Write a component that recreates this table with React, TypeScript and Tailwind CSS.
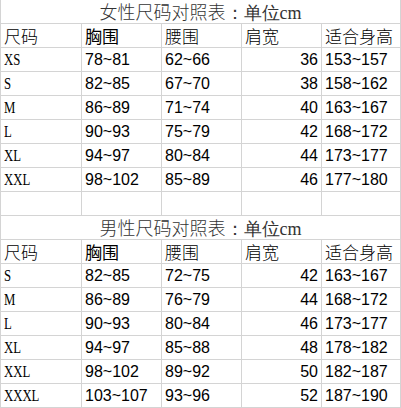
const women = [
  ["XS", "78~81", "62~66", "36", "153~157"],
  ["S", "82~85", "67~70", "38", "158~162"],
  ["M", "86~89", "71~74", "40", "163~167"],
  ["L", "90~93", "75~79", "42", "168~172"],
  ["XL", "94~97", "80~84", "44", "173~177"],
  ["XXL", "98~102", "85~89", "46", "177~180"],
];

const men = [
  ["S", "82~85", "72~75", "42", "163~167"],
  ["M", "86~89", "76~79", "44", "168~172"],
  ["L", "90~93", "80~84", "46", "173~177"],
  ["XL", "94~97", "85~88", "48", "178~182"],
  ["XXL", "98~102", "89~92", "50", "182~187"],
  ["XXXL", "103~107", "93~96", "52", "187~190"],
];

const widths = ["w-[81px]", "w-[80px]", "w-[80px]", "w-[80px]", "w-[79px]"];

const cjk = "font-['Noto_Sans_CJK_SC',sans-serif] text-[17px]";
const num = "font-['Liberation_Sans',Arial,sans-serif] text-[16px]";

function Cell({ i, children, className = "" }: { i: number; children?: React.ReactNode; className?: string }) {
  return (
    <div
      className={`${widths[i]} h-[24px] shrink-0 border-r border-b border-[#d4d4d4] flex items-center px-[3px] pt-[1px] overflow-hidden whitespace-nowrap text-black ${className}`}
    >
      {children}
    </div>
  );
}

function Title({ label }: { label: string }) {
  return (
    <div className="h-[24px] w-[400px] border-r border-b border-[#d4d4d4] flex items-center justify-center whitespace-nowrap text-[#333]">
      <span className="font-['Noto_Sans_CJK_SC',sans-serif] text-[18px] leading-[22px] font-light">
        {label}
        <span className="font-['Liberation_Serif',serif] text-[18px]">：单位cm</span>
      </span>
    </div>
  );
}

function Header() {
  return (
    <div className="flex">
      <Cell i={0} className={`${cjk} font-light`}>尺码</Cell>
      <Cell i={1} className={cjk}>胸围</Cell>
      <Cell i={2} className={`${cjk} font-light`}>腰围</Cell>
      <Cell i={3} className={`${cjk} font-light`}>肩宽</Cell>
      <Cell i={4} className={`${cjk} font-light`}>适合身高</Cell>
    </div>
  );
}

function Rows({ data }: { data: string[][] }) {
  return (
    <>
      {data.map((r) => (
        <div key={r[0]} className="flex">
          <Cell i={0}>
            {/* narrow serif, like SimSun's half-width latin */}
            <span className="inline-block origin-left scale-x-[0.75] font-['Liberation_Serif',serif] text-[17px]">
              {r[0]}
            </span>
          </Cell>
          <Cell i={1} className={num}>{r[1]}</Cell>
          <Cell i={2} className={num}>{r[2]}</Cell>
          <Cell i={3} className={`${num} justify-end`}>{r[3]}</Cell>
          <Cell i={4} className={num}>{r[4]}</Cell>
        </div>
      ))}
    </>
  );
}

export default function App() {
  return (
    <div className="w-[401px] h-[408px] bg-white overflow-hidden">
      <div className="border-l border-[#d4d4d4] w-[401px]">
        <Title label="女性尺码对照表" />
        <Header />
        <Rows data={women} />
        {/* empty spacer row */}
        <div className="flex">
          {[0, 1, 2, 3, 4].map((i) => (
            <Cell key={i} i={i} />
          ))}
        </div>
        <Title label="男性尺码对照表" />
        <Header />
        <Rows data={men} />
      </div>
    </div>
  );
}
